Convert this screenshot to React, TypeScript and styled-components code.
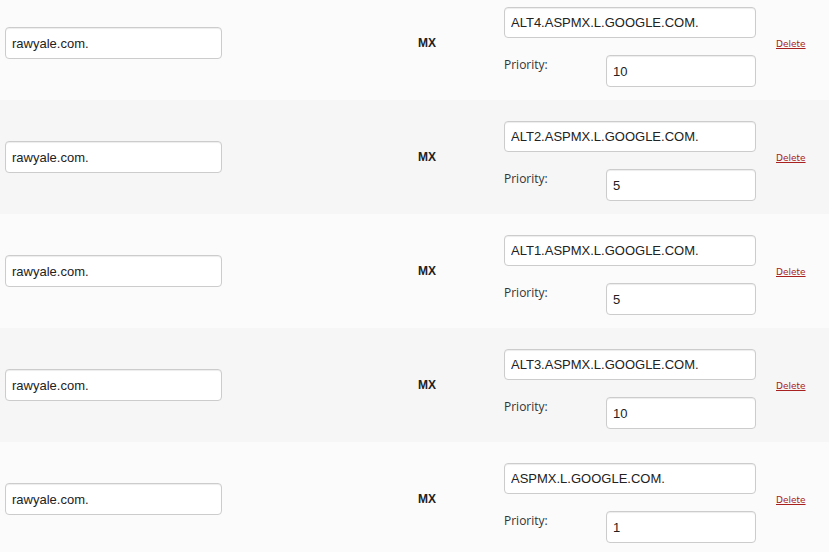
import * as React from 'react'
import styled, { createGlobalStyle } from 'styled-components';

interface IRecord {
    name: string;
    type: string;
    value: string;
    priority: string;
}

const records: IRecord[] = [
    { name: "rawyale.com.", type: "MX", value: "ALT4.ASPMX.L.GOOGLE.COM.", priority: "10" },
    { name: "rawyale.com.", type: "MX", value: "ALT2.ASPMX.L.GOOGLE.COM.", priority: "5" },
    { name: "rawyale.com.", type: "MX", value: "ALT1.ASPMX.L.GOOGLE.COM.", priority: "5" },
    { name: "rawyale.com.", type: "MX", value: "ALT3.ASPMX.L.GOOGLE.COM.", priority: "10" },
    { name: "rawyale.com.", type: "MX", value: "ASPMX.L.GOOGLE.COM.", priority: "1" },
];

const GlobalStyle = createGlobalStyle`
    html, body {
        margin: 0;
        padding: 0;
        background: #fbfbfb;
        overflow: hidden;
    }
`

const RecordRowComponent = (props: { record: IRecord, shaded: boolean }) => {
    const [name, setName] = React.useState(props.record.name);
    const [value, setValue] = React.useState(props.record.value);
    const [priority, setPriority] = React.useState(props.record.priority);

    return (
        <RecordRow shaded={props.shaded}>
            <NameCell>
                <TextInput value={name} onChange={(e) => setName(e.target.value)} type="text" />
            </NameCell>
            <TypeCell>{props.record.type}</TypeCell>
            <ValueCell>
                <ValueInput value={value} onChange={(e) => setValue(e.target.value)} type="text" />
                <PriorityRow>
                    <PriorityLabel>Priority:</PriorityLabel>
                    <PriorityInput value={priority} onChange={(e) => setPriority(e.target.value)} type="text" />
                </PriorityRow>
            </ValueCell>
            <DeleteCell>
                <DeleteLink href="#" onClick={(e) => e.preventDefault()}>Delete</DeleteLink>
            </DeleteCell>
        </RecordRow>
    )
}

export default function App() {
    return (
        <>
            <GlobalStyle />
            <RecordList>
                {records.map((r, i) => (
                    <RecordRowComponent key={i} record={r} shaded={i % 2 === 1} />
                ))}
            </RecordList>
        </>
    )
}

// first row is partly scrolled off the top
const RecordList = styled.div`
    margin-top: -14px;
    width: 829px;
`

const RecordRow = styled.div<{ shaded: boolean }>`
    display: grid;
    grid-template-columns: 217px 282px 252px 1fr;
    height: 114px;
    padding-left: 5px;
    box-sizing: border-box;
    background: ${(p) => (p.shaded ? '#f6f6f6' : '#fbfbfb')};
`

const NameCell = styled.div`
    display: flex;
    align-items: center;
`

const TextInput = styled.input`
    box-sizing: border-box;
    width: 100%;
    height: 32px;
    padding: 0 6px;
    border: 1px solid #cccccc;
    border-radius: 4px;
    background: #ffffff;
    box-shadow: inset 0 1px 1px rgba(0, 0, 0, 0.075);
    font-family: "Liberation Sans", Arial, sans-serif;
    font-size: 13px;
    color: #222222;
    outline: none;
`

const TypeCell = styled.div`
    display: flex;
    align-items: center;
    padding-left: 196px;
    font-family: "Liberation Sans", Arial, sans-serif;
    font-weight: bold;
    font-size: 12px;
    color: #222222;
`

const ValueCell = styled.div`
    display: flex;
    flex-direction: column;
    padding-top: 21px;
    gap: 17px;
`

const ValueInput = styled(TextInput)`
    height: 31px;
`

const PriorityRow = styled.div`
    display: flex;
    align-items: flex-start;
    justify-content: space-between;
`

const PriorityLabel = styled.span`
    font-family: "Open Sans", sans-serif;
    font-size: 12px;
    line-height: 16px;
    padding-top: 2px;
    color: #333333;
`

const PriorityInput = styled(TextInput)`
    width: 150px;
`

const DeleteCell = styled.div`
    display: flex;
    align-items: center;
    padding-left: 20px;
    padding-top: 2px;
`

const DeleteLink = styled.a`
    font-family: "DejaVu Sans", Verdana, sans-serif;
    font-size: 9px;
    color: #a82020;
    text-decoration: underline;
`
